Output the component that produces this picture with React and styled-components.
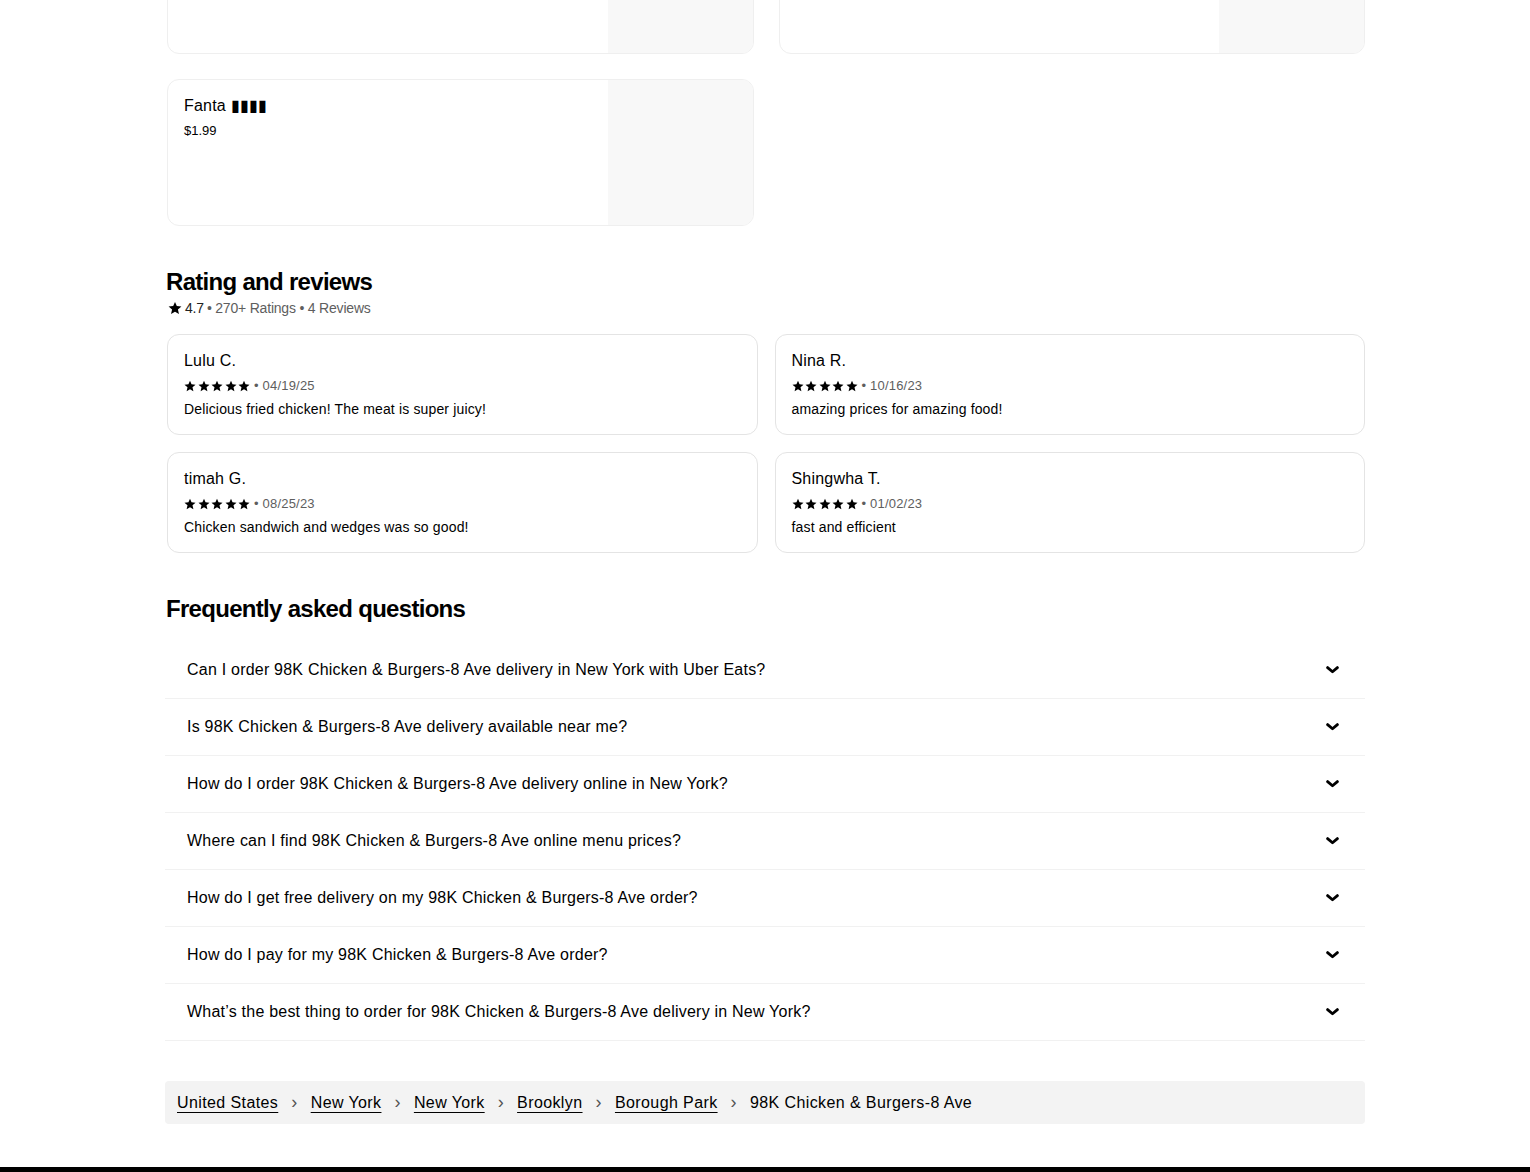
import React from 'react'
import styled, { createGlobalStyle } from 'styled-components'

const GlobalStyle = createGlobalStyle`
  body {
    margin: 0;
    background: #ffffff;
    font-family: "Liberation Sans", Arial, sans-serif;
    color: #000000;
  }
  * { box-sizing: border-box; }
`

const Page = styled.div`
  width: 1200px;
  margin: 0 auto;
  display: flex;
  flex-direction: column;
`

const MenuGrid = styled.div`
  display: grid;
  grid-template-columns: 1fr 1fr;
  column-gap: 25px;
  row-gap: 25px;
  margin-top: -93px;
  padding-left: 2px;
`

const MenuCard = styled.div`
  height: 147px;
  border: 1px solid #efefef;
  border-radius: 12px;
  display: flex;
  overflow: hidden;
  background: #fff;
`

const MenuInfo = styled.div`
  flex: 1;
  padding: 16px 16px;
  display: flex;
  flex-direction: column;
`

const MenuTitle = styled.div`
  font-size: 16px;
  line-height: 20px;
  letter-spacing: 0.2px;
`

const MenuPrice = styled.div`
  font-size: 13px;
  line-height: 20px;
  margin-top: 5px;
`

const MenuImage = styled.div`
  width: 145px;
  background: #f8f8f8;
`

const SectionTitle = styled.h2`
  margin: 40px 0 0 0;
  padding-left: 1px;
  font-size: 24px;
  line-height: 32px;
  font-weight: 700;
  letter-spacing: -0.7px;
`

const Summary = styled.div`
  display: flex;
  align-items: center;
  gap: 3px;
  font-size: 14px;
  line-height: 20px;
  color: #5e5e5e;
  padding-left: 3px;
  letter-spacing: -0.2px;
`

const Strong = styled.span`
  color: #222;
`

const ReviewGrid = styled.div`
  display: grid;
  grid-template-columns: 1fr 1fr;
  gap: 17px;
  margin-top: 16px;
  padding-left: 2px;
`

const ReviewCard = styled.div`
  border: 1px solid #e4e4e4;
  border-radius: 12px;
  padding: 16px 16px 14px;
  display: flex;
  flex-direction: column;
`

const ReviewName = styled.div`
  font-size: 16px;
  line-height: 20px;
  letter-spacing: 0.2px;
`

const ReviewMeta = styled.div`
  display: flex;
  align-items: center;
  gap: 4px;
  font-size: 13px;
  line-height: 24px;
  color: #5e5e5e;
  margin-top: 3px;
  letter-spacing: 0.2px;
`

const Stars = styled.span`
  display: flex;
  gap: 1.5px;
`

const ReviewText = styled.div`
  font-size: 14px;
  line-height: 22px;
  letter-spacing: 0.15px;
`

const FaqList = styled.div`
  margin-top: 17px;
  display: flex;
  flex-direction: column;
`

const FaqRow = styled.div`
  height: 57px;
  border-bottom: 1px solid #f1f1f1;
  display: flex;
  align-items: center;
  justify-content: space-between;
  padding: 0 21px 0 22px;
  font-size: 16px;
  letter-spacing: 0.22px;
`

const Chevron = styled.span`
  width: 24px;
  height: 24px;
  display: flex;
  align-items: center;
  justify-content: center;
`

const Breadcrumbs = styled.nav`
  margin-top: 40px;
  height: 43px;
  background: #f3f3f3;
  border-radius: 4px;
  display: flex;
  align-items: center;
  padding: 0 12px;
  gap: 12px;
  font-size: 16px;
  letter-spacing: 0.4px;
`

const Crumb = styled.a`
  color: #000;
  text-decoration: underline;
  text-underline-offset: 4px;
`

const Sep = styled.span`
  color: #545454;
  font-size: 18px;
  padding: 0 1px;
`

const Footer = styled.div`
  margin-top: 43px;
  height: 10px;
  background: #000;
`

const Star = ({ size = 12 }) => (
  <svg width={size} height={size} viewBox="0 0 24 24" fill="#000">
    <path d="M12 1.5l3.1 7.2 7.9.7-6 5.2 1.8 7.7L12 18.3l-6.8 4 1.8-7.7-6-5.2 7.9-.7z" />
  </svg>
)

const ChevronDown = () => (
  <svg width="13" height="8" viewBox="0 0 13 8">
    <path d="M1.6 1.6l4.9 4.2 4.9-4.2" fill="none" stroke="#000" strokeWidth="2.8" strokeLinecap="round" strokeLinejoin="round" />
  </svg>
)

const menuItems = [
  { title: 'Sprite ▮▮▮▮', price: '$1.99' },
  { title: 'Coca-Cola ▮▮▮▮', price: '$1.99' },
  { title: 'Fanta ▮▮▮▮', price: '$1.99' },
]

const reviews = [
  { name: 'Lulu C.', date: '04/19/25', text: 'Delicious fried chicken! The meat is super juicy!' },
  { name: 'Nina R.', date: '10/16/23', text: 'amazing prices for amazing food!' },
  { name: 'timah G.', date: '08/25/23', text: 'Chicken sandwich and wedges was so good!' },
  { name: 'Shingwha T.', date: '01/02/23', text: 'fast and efficient' },
]

const faqs = [
  'Can I order 98K Chicken & Burgers-8 Ave delivery in New York with Uber Eats?',
  'Is 98K Chicken & Burgers-8 Ave delivery available near me?',
  'How do I order 98K Chicken & Burgers-8 Ave delivery online in New York?',
  'Where can I find 98K Chicken & Burgers-8 Ave online menu prices?',
  'How do I get free delivery on my 98K Chicken & Burgers-8 Ave order?',
  'How do I pay for my 98K Chicken & Burgers-8 Ave order?',
  'What’s the best thing to order for 98K Chicken & Burgers-8 Ave delivery in New York?',
]

const crumbs = ['United States', 'New York', 'New York', 'Brooklyn', 'Borough Park']

export default function App() {
  return (
    <>
      <GlobalStyle />
      <Page>
        <MenuGrid>
          {menuItems.map((m, i) => (
            <MenuCard key={i}>
              <MenuInfo>
                <MenuTitle>{m.title}</MenuTitle>
                <MenuPrice>{m.price}</MenuPrice>
              </MenuInfo>
              <MenuImage />
            </MenuCard>
          ))}
        </MenuGrid>

        <SectionTitle>Rating and reviews</SectionTitle>
        <Summary>
          <Star size={14} />
          <Strong>4.7</Strong> • 270+ Ratings • 4 Reviews
        </Summary>
        <ReviewGrid>
          {reviews.map((r, i) => (
            <ReviewCard key={i}>
              <ReviewName>{r.name}</ReviewName>
              <ReviewMeta>
                <Stars>
                  {[0, 1, 2, 3, 4].map(s => <Star key={s} />)}
                </Stars>
                • {r.date}
              </ReviewMeta>
              <ReviewText>{r.text}</ReviewText>
            </ReviewCard>
          ))}
        </ReviewGrid>

        <SectionTitle>Frequently asked questions</SectionTitle>
        <FaqList>
          {faqs.map((q, i) => (
            <FaqRow key={i}>
              <span>{q}</span>
              <Chevron><ChevronDown /></Chevron>
            </FaqRow>
          ))}
        </FaqList>

        <Breadcrumbs>
          {crumbs.map((c, i) => (
            <React.Fragment key={i}>
              <Crumb href="#">{c}</Crumb>
              <Sep>›</Sep>
            </React.Fragment>
          ))}
          <span>98K Chicken &amp; Burgers-8 Ave</span>
        </Breadcrumbs>
      </Page>
      <Footer />
    </>
  )
}
